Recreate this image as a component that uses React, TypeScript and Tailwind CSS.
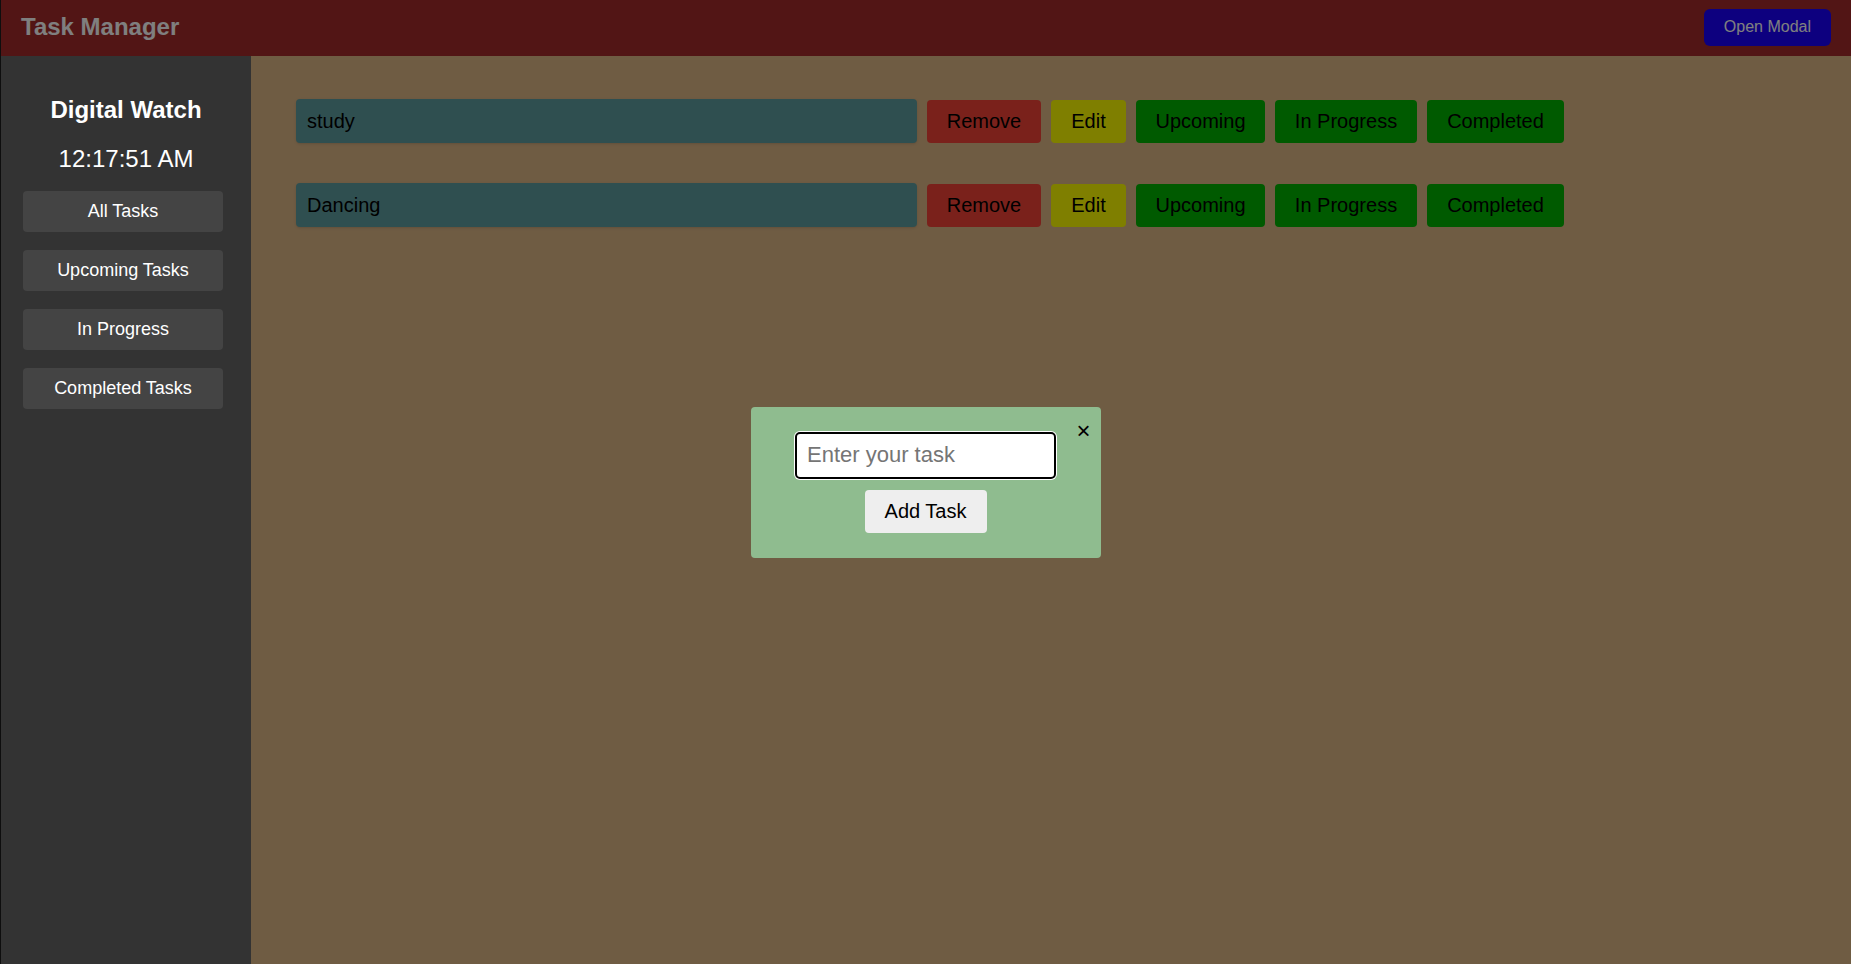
import React from "react";

const tasks = ["study", "Dancing"];

export default function App() {
  return (
    <div className="min-h-screen flex flex-col border-l border-[#1c1c1c] font-['Liberation_Sans',Arial,sans-serif]">
      <header className="h-[56px] shrink-0 bg-[#a52a2a] flex items-center justify-between pl-[20px] pr-[20px] pb-[2px]">
        <h1 className="text-[24px] font-bold text-white leading-[28px]">Task Manager</h1>
        <button className="h-[37px] px-[20px] rounded-[6px] bg-[#1a00ff] text-white text-[16px] leading-[18px]">
          Open Modal
        </button>
      </header>
      <div className="flex flex-1 min-h-[908px]">
        <aside className="relative z-20 w-[250px] shrink-0 bg-[#333333] pt-[40px] flex flex-col">
          <h2 className="text-center text-white font-bold text-[24px] leading-[28px]">Digital Watch</h2>
          <div className="text-center text-white text-[24px] leading-[28px] mt-[21px]">12:17:51 AM</div>
          <div className="flex flex-col gap-[18px] mt-[18px] pl-[22px]">
            {["All Tasks", "Upcoming Tasks", "In Progress", "Completed Tasks"].map((t) => (
              <button
                key={t}
                className="w-[200px] h-[41px] rounded-[4px] bg-[#444444] text-white text-[18px] leading-[20px] pb-[1px]"
              >
                {t}
              </button>
            ))}
          </div>
        </aside>
        <main className="flex-1 bg-[#deb887] pl-[45px] pt-[43px] flex flex-col gap-[40px]">
          {tasks.map((t) => (
            <div key={t} className="flex items-center gap-[10px]">
              <div className="w-[621px] h-[44px] rounded-[4px] bg-[#5f9ea0] text-black text-[20px] leading-[44px] pl-[11px] shadow-sm">
                {t}
              </div>
              <button className="h-[43px] w-[114px] rounded-[4px] bg-[#f44336] text-black text-[20px]">Remove</button>
              <button className="h-[43px] w-[75px] rounded-[4px] bg-[#ffff00] text-black text-[20px]">Edit</button>
              <button className="h-[43px] w-[129px] rounded-[4px] bg-[#00b400] text-black text-[20px]">Upcoming</button>
              <button className="h-[43px] w-[142px] rounded-[4px] bg-[#00b400] text-black text-[20px]">In Progress</button>
              <button className="h-[43px] w-[137px] rounded-[4px] bg-[#00b400] text-black text-[20px]">Completed</button>
            </div>
          ))}
        </main>
      </div>
      <div className="fixed inset-0 z-10 bg-black/50" />
      <div className="fixed inset-0 z-30 flex items-center justify-center">
        <div className="relative w-[350px] h-[151px] rounded-[4px] bg-[#8fbc8f] flex flex-col items-center pt-[25px]">
          <button className="absolute top-[12px] right-[10px] text-[24px] leading-none text-black">×</button>
          <input
            autoFocus
            placeholder="Enter your task"
            className="w-[261px] h-[47px] border-2 border-black rounded-[5px] bg-white ring-1 ring-white outline-none pl-[10px] text-[22px] text-black placeholder:text-[#757575] caret-black"
          />
          <button className="mt-[11px] w-[122px] h-[43px] rounded-[4px] bg-[#eeeeee] text-black text-[20px]">
            Add Task
          </button>
        </div>
      </div>
    </div>
  );
}
